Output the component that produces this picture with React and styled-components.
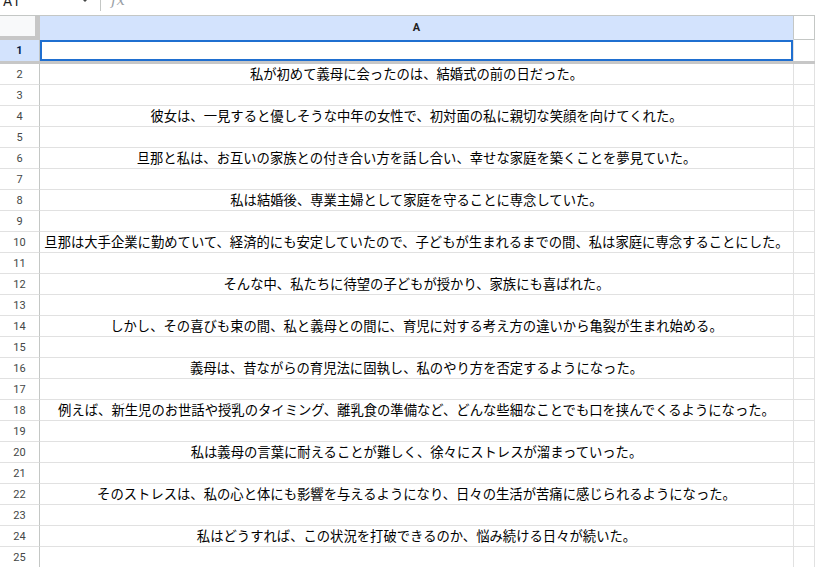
import React from "react";
import styled, { createGlobalStyle } from "styled-components";

const GlobalStyle = createGlobalStyle`
  html, body { margin: 0; padding: 0; background: #ffffff; overflow: hidden; }
  body { font-family: "Liberation Sans", Arial, sans-serif; }
  * { box-sizing: border-box; }
`;

const Sheet = styled.div`
  width: 815px;
  height: 567px;
  overflow: hidden;
  background: #fff;
`;

const Toolbar = styled.div`
  height: 16px;
  border-bottom: 1px solid #c4c7c5;
  display: flex;
  align-items: flex-start;
  overflow: hidden;
`;

const NameBox = styled.div`
  width: 100px;
  display: flex;
  align-items: flex-start;
  justify-content: space-between;
  padding: 0 10px 0 3px;
  margin-top: -7px;
  font-family: Roboto, "Liberation Sans", sans-serif;
  font-size: 14px;
  line-height: 16px;
  color: #1f1f1f;
`;

const Caret = styled.svg`
  margin-top: 4px;
  width: 10px;
  height: 8px;
`;

const Divider = styled.div`
  width: 1px;
  height: 11px;
  background: #c4c7c5;
`;

const Fx = styled.div`
  margin: -8px 0 0 10px;
  font-family: "DejaVu Serif", "Liberation Serif", serif;
  font-style: italic;
  font-size: 15px;
  line-height: 16px;
  color: #9aa0a6;
`;

const Grid = styled.div`
  display: grid;
  grid-template-columns: 40px 754px 1fr;
`;

const Corner = styled.div`
  height: 24px;
  background: #f8f9fa;
  box-shadow: inset -5px -4px 0 #c7c7c7;
`;

const ColHeader = styled.div`
  height: 24px;
  display: flex;
  align-items: center;
  justify-content: center;
  background: ${(p) => (p.$selected ? "#d3e3fd" : "#ffffff")};
  border-right: 1px solid #c4c7c5;
  border-bottom: 1px solid ${(p) => (p.$selected ? "#d3e3fd" : "#c4c7c5")};
  font-family: Roboto, "Liberation Sans", sans-serif;
  font-size: 11px;
  font-weight: 700;
  color: #1f1f1f;
`;

const RowHeader = styled.div`
  height: 21px;
  display: flex;
  align-items: center;
  justify-content: center;
  background: ${(p) => (p.$selected ? "#d3e3fd" : "#ffffff")};
  border-right: 1px solid #c4c7c5;
  border-bottom: ${(p) => (p.$frozen ? "none" : "1px solid #e1e1e1")};
  font-family: Roboto, "Liberation Sans", sans-serif;
  font-size: 11px;
  font-weight: ${(p) => (p.$selected ? 700 : 400)};
  color: ${(p) => (p.$selected ? "#041e49" : "#444746")};
`;

const Cell = styled.div`
  height: 21px;
  display: flex;
  align-items: center;
  justify-content: center;
  white-space: nowrap;
  border-right: 1px solid #e1e1e1;
  border-bottom: ${(p) => (p.$frozen ? "none" : "1px solid #e1e1e1")};
  box-shadow: ${(p) => (p.$selected ? "inset 0 0 0 2px #1f6fd0" : "none")};
  font-family: "Noto Sans CJK JP", "Liberation Sans", sans-serif;
  font-size: 13.33px;
  line-height: 20px;
  color: #000;
`;

const FreezeBar = styled.div`
  grid-column: 1 / -1;
  height: 3px;
  background: #c7c7c7;
`;

const texts = {
  2: "私が初めて義母に会ったのは、結婚式の前の日だった。",
  4: "彼女は、一見すると優しそうな中年の女性で、初対面の私に親切な笑顔を向けてくれた。",
  6: "旦那と私は、お互いの家族との付き合い方を話し合い、幸せな家庭を築くことを夢見ていた。",
  8: "私は結婚後、専業主婦として家庭を守ることに専念していた。",
  10: "旦那は大手企業に勤めていて、経済的にも安定していたので、子どもが生まれるまでの間、私は家庭に専念することにした。",
  12: "そんな中、私たちに待望の子どもが授かり、家族にも喜ばれた。",
  14: "しかし、その喜びも束の間、私と義母との間に、育児に対する考え方の違いから亀裂が生まれ始める。",
  16: "義母は、昔ながらの育児法に固執し、私のやり方を否定するようになった。",
  18: "例えば、新生児のお世話や授乳のタイミング、離乳食の準備など、どんな些細なことでも口を挟んでくるようになった。",
  20: "私は義母の言葉に耐えることが難しく、徐々にストレスが溜まっていった。",
  22: "そのストレスは、私の心と体にも影響を与えるようになり、日々の生活が苦痛に感じられるようになった。",
  24: "私はどうすれば、この状況を打破できるのか、悩み続ける日々が続いた。",
};

const rows = Array.from({ length: 24 }, (_, i) => i + 2);

export default function App() {
  return (
    <Sheet>
      <GlobalStyle />
      <Toolbar>
        <NameBox>
          <span>A1</span>
          <Caret viewBox="0 0 10 8">
            <polygon points="0,0 10,0 5,5" fill="#444746" />
          </Caret>
        </NameBox>
        <Divider />
        <Fx>fx</Fx>
      </Toolbar>
      <Grid>
        <Corner />
        <ColHeader $selected>A</ColHeader>
        <ColHeader />

        <RowHeader $selected $frozen>1</RowHeader>
        <Cell $selected $frozen />
        <Cell $frozen />
        <FreezeBar />

        {rows.map((r) => (
          <React.Fragment key={r}>
            <RowHeader>{r}</RowHeader>
            <Cell>{texts[r] || ""}</Cell>
            <Cell />
          </React.Fragment>
        ))}
      </Grid>
    </Sheet>
  );
}
